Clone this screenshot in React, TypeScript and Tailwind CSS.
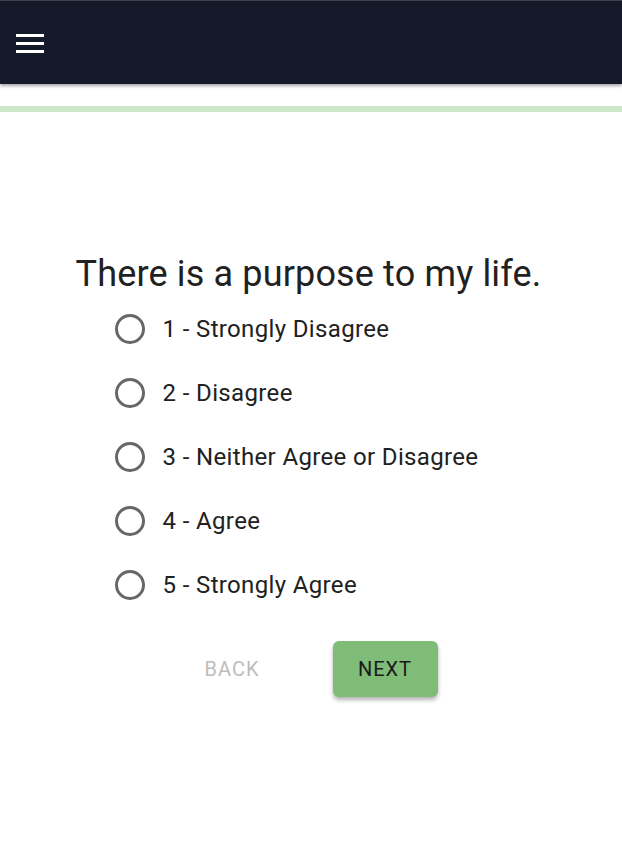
import React, { useState } from "react";

const options = [
  "1 - Strongly Disagree",
  "2 - Disagree",
  "3 - Neither Agree or Disagree",
  "4 - Agree",
  "5 - Strongly Agree",
];

export default function App() {
  const [sel, setSel] = useState<number | null>(null);
  return (
    <div className="min-h-[846px] bg-white font-['Roboto','Liberation_Sans',sans-serif]">
      <header className="h-[84px] bg-[#141a29] border-t border-[#3b404b] flex items-center pl-[16px] shadow-[0_2px_3px_rgba(0,0,0,0.35)] relative z-10">
        <svg width="28" height="19" viewBox="0 0 28 19" className="mt-[1px]">
          <rect x="0" y="0" width="28" height="3" fill="#ffffff" />
          <rect x="0" y="8" width="28" height="3" fill="#ffffff" />
          <rect x="0" y="16" width="28" height="3" fill="#ffffff" />
        </svg>
      </header>
      <div className="mt-[22px] h-[6px] bg-[#cde5c8]" />
      <main className="flex justify-center pt-[141px] pr-[5px]">
        <div className="flex flex-col">
          <h1 className="text-[36px] leading-[42px] text-[#212121] font-normal tracking-[0.15px]">
            There is a purpose to my life.
          </h1>
          <div className="mt-[2px] pl-[39px] flex flex-col">
            {options.map((o, i) => (
              <label
                key={o}
                className="h-[64px] flex items-center cursor-pointer"
                onClick={() => setSel(i)}
              >
                <span className="w-[30px] h-[30px] rounded-full border-[3px] border-[#676767] flex items-center justify-center">
                  {sel === i && <span className="w-[14px] h-[14px] rounded-full bg-[#676767]" />}
                </span>
                <span className="ml-[18px] text-[24px] text-[#212121] tracking-[0.35px]">{o}</span>
              </label>
            ))}
          </div>
          <div className="mt-[24px] flex justify-center gap-[48px]">
            <button className="w-[105px] h-[56px] text-[20px] text-[#bdbdbd] tracking-[1px]">
              BACK
            </button>
            <button className="w-[105px] h-[56px] rounded-[6px] bg-[#7fbc77] text-[20px] text-[#1a1a1a] tracking-[1px] shadow-[0_3px_4px_rgba(0,0,0,0.3)]">
              NEXT
            </button>
          </div>
        </div>
      </main>
    </div>
  );
}
